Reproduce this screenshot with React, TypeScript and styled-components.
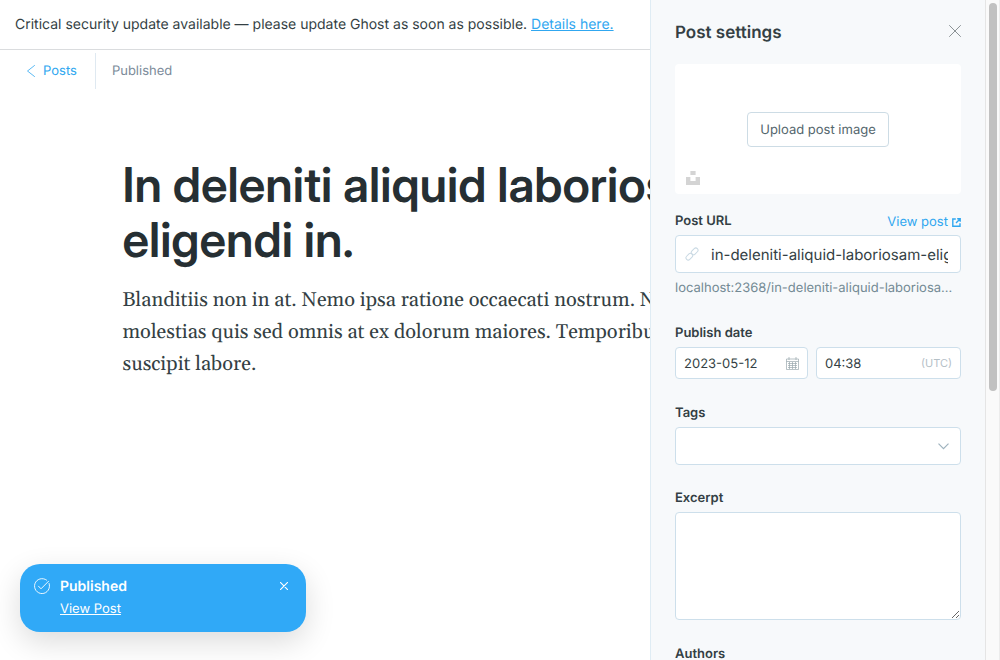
import React from 'react';
import styled, { createGlobalStyle } from 'styled-components';

const GlobalStyle = createGlobalStyle`
  *, *::before, *::after { box-sizing: border-box; }
  html, body, #root { height: 100%; }
  body {
    margin: 0;
    background: #fff;
    color: #343f44;
    font-family: Inter, "Liberation Sans", sans-serif;
    font-size: 14px;
    line-height: 20px;
    text-rendering: geometricPrecision;
  }
  button, input, select, textarea { font: inherit; color: inherit; text-rendering: inherit; }
  svg { display: block; flex: none; }
`;

const Page = styled.div`
  position: relative;
  display: flex;
  flex-direction: column;
  min-height: 100vh;
  overflow: hidden;
`;

const Alert = styled.aside`
  padding: 15px 15px 14px;
  border-bottom: 1px solid #dadcde;
  a { color: #30a7f0; }
`;

const Toolbar = styled.header`
  display: flex;
  align-items: center;
  height: 46px;
  padding: 3px 26px 7px;
  font-size: 13px;
`;

const BackLink = styled.a`
  display: flex;
  align-items: center;
  gap: 7px;
  height: 36px;
  padding-right: 18px;
  border-right: 1px solid #dfe9f1;
  color: #30a7f0;
  text-decoration: none;
`;

const Status = styled.span`
  padding-left: 16px;
  color: #7c8b9a;
`;

const EditorArea = styled.main`
  padding-right: 15px;
`;

const Article = styled.article`
  max-width: 740px;
  margin: 61px auto 0;
`;

const Title = styled.h1`
  margin: 0 0 17px;
  color: #262f33;
  font-family: "Inter Display", Inter, sans-serif;
  font-size: 48px;
  font-weight: 600;
  line-height: 55px;
`;

const Body = styled.p`
  margin: 0;
  font-family: Georgia, Gelasio, serif;
  font-size: 20px;
  line-height: 32px;
`;

const Toast = styled.section`
  position: absolute;
  left: 20px;
  bottom: 28px;
  display: flex;
  align-items: flex-start;
  gap: 10px;
  width: 286px;
  height: 68px;
  padding: 12px 14px;
  border-radius: 20px;
  background: #30a9f7;
  box-shadow: 0 10px 30px rgba(0, 0, 0, 0.14);
  color: #fff;
  > svg { margin-top: 2px; }
`;

const ToastText = styled.div`
  flex: 1;
  padding-top: 1px;
  strong { display: block; font-weight: 600; line-height: 20px; }
  a { display: block; width: max-content; color: #fff; font-size: 13px; line-height: 24px; }
`;

const IconButton = styled.button`
  display: flex;
  padding: 0;
  border: 0;
  background: none;
  cursor: pointer;
`;

const ToastClose = styled(IconButton)`
  padding: 6px 4px;
`;

const Drawer = styled.aside`
  position: fixed;
  top: 0;
  right: 0;
  bottom: 0;
  display: flex;
  width: 350px;
  border-left: 1px solid #dfecf4;
  background: #f7f9fb;
`;

const Settings = styled.form`
  flex: 1;
  min-width: 0;
  padding: 20px 24px 0;
  overflow: hidden;
`;

const SettingsHeader = styled.div`
  display: flex;
  align-items: flex-start;
  justify-content: space-between;
  height: 24px;
  margin-bottom: 20px;
  h2 { margin: 0; font-size: 17px; font-weight: 600; line-height: 26px; }
`;

const PanelClose = styled(IconButton)`
  padding-top: 5px;
`;

const Uploader = styled.div`
  display: grid;
  grid-template-rows: 1fr auto 1fr;
  justify-items: center;
  height: 130px;
  margin-bottom: 15px;
  border-radius: 4px;
  background: #fff;
`;

const UploadButton = styled.button`
  grid-row: 2;
  height: 35px;
  padding: 2px 12px 0;
  border: 1px solid #cddce5;
  border-radius: 4px;
  background: #fff;
  color: #54666d;
  font-size: 13px;
`;

const UnsplashButton = styled(IconButton)`
  grid-row: 3;
  place-self: end start;
  padding: 0 0 9px 11px;
`;

const Field = styled.div<{ $gap: number }>`
  margin-bottom: ${(p) => p.$gap}px;
`;

const LabelRow = styled.div`
  display: flex;
  justify-content: space-between;
  height: 26px;
  padding-top: 2px;
  font-size: 13px;
  line-height: 20px;
  label, span { font-weight: 600; }
  a { display: flex; gap: 4px; align-items: center; height: 22px; color: #30a7f0; text-decoration: none; }
`;

const Box = styled.div<{ $height: number }>`
  position: relative;
  display: flex;
  flex: 1;
  align-items: center;
  min-width: 0;
  height: ${(p) => p.$height}px;
  padding: 0 8px;
  border: 1px solid #cddfeb;
  border-radius: 4px;
  background: #fff;
  font-size: 13px;
  input {
    flex: 1;
    width: 100%;
    min-width: 0;
    padding: 2px 0 0;
    border: 0;
    outline: 0;
    background: none;
  }
  small { color: #b5c0c7; font-size: 11px; }
`;

const UrlBox = styled(Box)`
  gap: 12px;
  padding: 0 12px 0 9px;
  font-size: 15px;
`;

const DateBox = styled(Box)`
  flex: 0 0 133px;
`;

const DateRow = styled.div`
  display: flex;
  gap: 8px;
`;

const Hint = styled.p`
  margin: 5px 0 0;
  padding-right: 8px;
  overflow: hidden;
  color: #738a94;
  font-size: 13px;
  text-overflow: ellipsis;
  white-space: nowrap;
`;

const SelectBox = styled(Box)`
  padding: 0;
  select {
    width: 100%;
    height: 100%;
    padding: 0 36px 0 12px;
    border: 0;
    outline: 0;
    background: none;
    appearance: none;
  }
  svg { position: absolute; right: 11px; pointer-events: none; }
`;

const Excerpt = styled.textarea`
  display: block;
  width: 100%;
  height: 108px;
  padding: 8px 12px;
  border: 1px solid #cddfeb;
  border-radius: 4px;
  outline: 0;
  background: #fff;
  resize: vertical;
`;

const Track = styled.div`
  width: 15px;
  padding: 3px 2px 0 3px;
  border-left: 1px solid #e5e5e5;
  border-right: 1px solid #ececec;
  background: #fafafa;
`;

const Thumb = styled.div`
  width: 8px;
  height: 388px;
  border-radius: 4px;
  background: #c1c1c1;
`;

function Cross({ size, color, width = 1 }: { size: number; color: string; width?: number }) {
  return (
    <svg width={size} height={size} viewBox="0 0 12 12" fill="none" stroke={color} strokeWidth={width} strokeLinecap="round">
      <path d="M.5.5l11 11M11.5.5l-11 11" />
    </svg>
  );
}

export default function App() {
  return (
    <>
      <GlobalStyle />
      <Page>
        <Alert>
          Critical security update available — please update Ghost as soon as possible. <a href="#details">Details here.</a>
        </Alert>
        <Toolbar>
          <BackLink href="#posts">
            <svg width="10" height="14" viewBox="0 0 10 14" fill="none" stroke="#30a7f0" strokeWidth="0.8" strokeLinecap="round">
              <path d="M8.500 1.500L1.500 7l7 5.500" />
            </svg>
            Posts
          </BackLink>
          <Status>Published</Status>
        </Toolbar>
        <EditorArea>
          <Article>
            <Title>In deleniti aliquid laboriosam eligendi in.</Title>
            <Body>
              Blanditiis non in at. Nemo ipsa ratione occaecati nostrum. Nesciunt accusantium molestias quis sed omnis at
              ex dolorum maiores. Temporibus autem consequatur suscipit labore.
            </Body>
          </Article>
        </EditorArea>
        <Toast>
          <svg width="16" height="16" viewBox="0 0 16 16" fill="none" stroke="#fff" strokeWidth="0.9" strokeLinecap="round" strokeLinejoin="round">
            <path d="M15.1 5.5A7.5 7.5 0 1 1 12.6 2.1" />
            <path d="M4.5 8.2L7 10.8l7.5-7.5" />
          </svg>
          <ToastText>
            <strong>Published</strong>
            <a href="#view">View Post</a>
          </ToastText>
          <ToastClose type="button" aria-label="Dismiss">
            <Cross size={8} color="#fff" width={1.7} />
          </ToastClose>
        </Toast>
      </Page>
      <Drawer>
        <Settings>
          <SettingsHeader>
            <h2>Post settings</h2>
            <PanelClose type="button" aria-label="Close">
              <Cross size={12} color="#6f777b" width={0.8} />
            </PanelClose>
          </SettingsHeader>
          <Uploader>
            <UploadButton type="button">Upload post image</UploadButton>
            <UnsplashButton type="button" aria-label="Unsplash">
              <svg width="14" height="14" viewBox="0 0 14 14" fill="#d4d4d4">
                <path d="M4.4 0h5.2v4H4.4zM0 6h4.4v4h5.2V6H14v8H0z" />
              </svg>
            </UnsplashButton>
          </Uploader>
          <Field $gap={23}>
            <LabelRow>
              <label htmlFor="url">Post URL</label>
              <a href="#post">
                View post
                <svg width="9" height="9" viewBox="0 0 9 9" fill="none" stroke="#30a7f0" strokeWidth="1.4">
                  <path d="M3.8 1H.8v7.2H8V5.2M5.2.8h3v3M8 1L4 5" />
                </svg>
              </a>
            </LabelRow>
            <UrlBox $height={38}>
              <svg width="14" height="14" viewBox="0 0 14 14" fill="none" stroke="#c9d9e3" strokeWidth="1">
                <rect x="-3.600" y="-2.200" width="7.600" height="4.400" rx="2.200" transform="translate(4.200 9.800) rotate(-45)" />
                <rect x="-4" y="-2.200" width="7.600" height="4.400" rx="2.200" transform="translate(9.800 4.200) rotate(-45)" />
              </svg>
              <input id="url" type="text" defaultValue="in-deleniti-aliquid-laboriosam-eligendi-in" />
            </UrlBox>
            <Hint>localhost:2368/in-deleniti-aliquid-laboriosam-eligendi-in/</Hint>
          </Field>
          <Field $gap={22}>
            <LabelRow>
              <label htmlFor="date">Publish date</label>
            </LabelRow>
            <DateRow>
              <DateBox $height={32}>
                <input id="date" type="text" defaultValue="2023-05-12" />
                <svg width="13" height="13" viewBox="0 0 13 13" fill="none" stroke="#9aa7ae" strokeWidth="0.7">
                  <path d="M.5 2h12v10.500H.5zM.5 4.500h12M3 0v3M10 0v3M2 6.500h9M2 8.500h9M2 10.500h9M3.500 5v7M6.500 5v7M9.500 5v7" />
                </svg>
              </DateBox>
              <Box $height={32}>
                <input aria-label="Publish time" type="text" defaultValue="04:38" />
                <small>(UTC)</small>
              </Box>
            </DateRow>
          </Field>
          <Field $gap={21}>
            <LabelRow>
              <label htmlFor="tags">Tags</label>
            </LabelRow>
            <SelectBox $height={38}>
              <select id="tags" defaultValue="">
                <option value="" />
              </select>
              <svg width="11" height="7" viewBox="0 0 11 7" fill="none" stroke="#9fb3be" strokeWidth="1.2">
                <path d="M.5.7l5 5 5-5" />
              </svg>
            </SelectBox>
          </Field>
          <Field $gap={22}>
            <LabelRow>
              <label htmlFor="excerpt">Excerpt</label>
            </LabelRow>
            <Excerpt id="excerpt" />
          </Field>
          <LabelRow>
            <span>Authors</span>
          </LabelRow>
        </Settings>
        <Track>
          <Thumb />
        </Track>
      </Drawer>
    </>
  );
}
